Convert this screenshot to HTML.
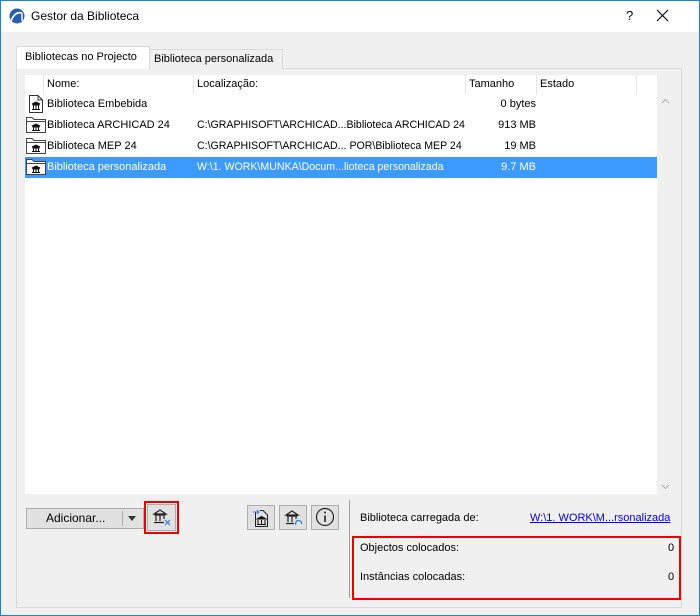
<!DOCTYPE html>
<html><head><meta charset="utf-8"><style>
*{margin:0;padding:0;box-sizing:border-box}
body{width:700px;height:616px;overflow:hidden;background:#f0f0f0;font-family:"Liberation Sans",sans-serif;font-size:11.5px;color:#000;position:relative}
.a{position:absolute;white-space:nowrap}
.btn{position:absolute;background:#e1e1e1;border:1px solid #adadad}
.hd{position:absolute;top:75px;height:19px;line-height:19px;border-right:1px solid #e5e5e5;padding-left:3px;font-size:11px}
.row{position:absolute;left:25px;width:632px;height:21px;line-height:21px;font-size:11px}
.row span{position:absolute}
.row span.r{right:121px;text-align:right}
.row span.l{font-size:10.6px}
.sel{background:#3d9bff;color:#fff}
</style></head><body>
<div class="a" style="left:0;top:0;width:700px;height:32px;background:#fff"></div>
<div class="a" style="left:0;top:0;width:1px;height:616px;background:#1883d7"></div>
<div class="a" style="left:699px;top:0;width:1px;height:616px;background:#1883d7"></div>
<div class="a" style="left:0;top:0;width:700px;height:1px;background:#1883d7"></div>
<div class="a" style="left:0;top:615px;width:700px;height:1px;background:#1883d7"></div>
<svg class="a" style="left:9px;top:8px" width="16" height="16" viewBox="0 0 16 16"><circle cx="8" cy="8" r="7.5" fill="#2a5fb0"/><path d="M2 13 Q6 3 13 5" stroke="#fff" stroke-width="1.6" fill="none"/><path d="M13 5 L13 13" stroke="#fff" stroke-width="1.4"/></svg>
<div class="a" style="left:31px;top:9px;font-size:12px">Gestor da Biblioteca</div>
<div class="a" style="left:626px;top:8px;font-size:13px">?</div>
<svg class="a" style="left:656px;top:9px" width="13" height="13"><path d="M1 1L12 12M12 1L1 12" stroke="#000" stroke-width="1.1"/></svg>

<div class="a" style="left:16px;top:68px;width:666px;height:540px;border:1px solid #d9d9d9;background:#f0f0f0"></div>
<div class="a" style="left:149px;top:49px;width:134px;height:20px;border:1px solid #d9d9d9;border-bottom:none;background:#f0f0f0;padding:3px 0 0 4px;font-size:11px">Biblioteca personalizada</div>
<div class="a" style="left:16px;top:46px;width:134px;height:23px;border:1px solid #d9d9d9;border-bottom:none;background:#fff;padding:4px 0 0 8px;font-size:11px">Bibliotecas no Projecto</div>
<div class="a" style="left:17px;top:68px;width:132px;height:1px;background:#fff"></div>

<div class="a" style="left:25px;top:75px;width:632px;height:419px;background:#fff"></div>
<div class="a" style="left:657px;top:75px;width:23px;height:419px;background:#f0f0f0"></div>
<svg class="a" style="left:661px;top:98px" width="9" height="6"><path d="M1 5L4.5 1.5L8 5" stroke="#b0b0b0" fill="none"/></svg>
<svg class="a" style="left:661px;top:484px" width="9" height="6"><path d="M1 1L4.5 4.5L8 1" stroke="#b0b0b0" fill="none"/></svg>
<div class="hd" style="left:25px;width:19px"></div>
<div class="hd" style="left:44px;width:150px">Nome:</div>
<div class="hd" style="left:194px;width:272px">Localização:</div>
<div class="hd" style="left:466px;width:71px">Tamanho</div>
<div class="hd" style="left:537px;width:100px">Estado</div>

<div class="row" style="top:94px"><span style="left:22px">Biblioteca Embebida</span><span class="r">0 bytes</span></div>
<div class="row" style="top:115px"><span style="left:22px">Biblioteca ARCHICAD 24</span><span class="l" style="left:172px">C:\GRAPHISOFT\ARCHICAD...Biblioteca ARCHICAD 24</span><span class="r">913 MB</span></div>
<div class="row" style="top:136px"><span style="left:22px">Biblioteca MEP 24</span><span class="l" style="left:172px">C:\GRAPHISOFT\ARCHICAD... POR\Biblioteca MEP 24</span><span class="r">19 MB</span></div>
<div class="row sel" style="top:157px"><span style="left:22px">Biblioteca personalizada</span><span class="l" style="left:172px">W:\1. WORK\MUNKA\Docum...lioteca personalizada</span><span class="r">9.7 MB</span></div>

<svg class="a" style="left:28px;top:95px" width="16" height="18" viewBox="0 0 16 18"><path d="M1.5 .5H10L14.5 5V17.5H1.5Z M10 .5V5H14.5" fill="#fff" stroke="#333"/><path d="M4 9L8 7L12 9Z M4.5 10H11.5 M5.5 10V14 M8 10V14 M10.5 10V14 M4 14.5H12" stroke="#111" fill="#111" stroke-width="1"/></svg>
<svg class="a" style="left:26px;top:116px" width="20" height="17" viewBox="0 0 20 17"><path d="M.5 1.5H6L8 3.5H19.5V16.5H.5Z M.5 5.5H19.5" fill="#fff" stroke="#444"/><path d="M6 10L10 8L14 10Z M6.5 11H13.5 M7.5 11V14 M10 11V14 M12.5 11V14 M6 14.5H14" stroke="#111" fill="#111"/></svg>
<svg class="a" style="left:26px;top:137px" width="20" height="17" viewBox="0 0 20 17"><path d="M.5 1.5H6L8 3.5H19.5V16.5H.5Z M.5 5.5H19.5" fill="#fff" stroke="#444"/><path d="M6 10L10 8L14 10Z M6.5 11H13.5 M7.5 11V14 M10 11V14 M12.5 11V14 M6 14.5H14" stroke="#111" fill="#111"/></svg>
<svg class="a" style="left:26px;top:158px" width="20" height="17" viewBox="0 0 20 17"><path d="M.5 1.5H6L8 3.5H19.5V16.5H.5Z M.5 5.5H19.5" fill="#fff" stroke="#444"/><path d="M6 10L10 8L14 10Z M6.5 11H13.5 M7.5 11V14 M10 11V14 M12.5 11V14 M6 14.5H14" stroke="#111" fill="#111"/></svg>

<div class="btn" style="left:26px;top:508px;width:118px;height:21px"></div>
<div class="a" style="left:46px;top:511px;font-size:12px">Adicionar...</div>
<div class="a" style="left:122px;top:511px;width:1px;height:15px;background:#adadad"></div>
<div class="a" style="left:128px;top:516px;width:0;height:0;border-left:4px solid transparent;border-right:4px solid transparent;border-top:5px solid #333"></div>
<div class="a" style="left:144px;top:501px;width:35px;height:33px;border:2px solid #e00"></div>
<div class="btn" style="left:147px;top:504px;width:29px;height:27px"></div>
<svg class="a" style="left:152px;top:508px" width="20" height="18" viewBox="0 0 20 18"><path d="M2 6L8 2L14 6Z M2.5 7H13.5 M4 7V13 M8 7V13 M12 7V11 M2 14.5H12" stroke="#222" fill="none" stroke-width="1.2"/><path d="M13 12L18 17M18 12L13 17" stroke="#2a7de1" stroke-width="1.2"/></svg>

<div class="btn" style="left:247px;top:505px;width:28px;height:25px"></div>
<svg class="a" style="left:252px;top:507px" width="18" height="21" viewBox="0 0 18 21"><path d="M3.5 4.5V19.5H15.5V8L11 3.5H8" fill="none" stroke="#222"/><path d="M1 5H7M5 3L7 5L5 7" stroke="#2a7de1" fill="none"/><path d="M5 12L9.5 9.5L14 12Z M6 13V17 M9.5 13V17 M13 13V17 M5 17.5H14" stroke="#111" fill="#111"/></svg>
<div class="btn" style="left:279px;top:505px;width:28px;height:25px"></div>
<svg class="a" style="left:284px;top:509px" width="20" height="18" viewBox="0 0 20 18"><path d="M2 6L8 2L14 6Z M2.5 7H13.5 M4 7V13 M8 7V13 M12 7V10 M2 14.5H10" stroke="#222" fill="none" stroke-width="1.2"/><path d="M12 16A3 3 0 1 1 17.5 15" stroke="#2a7de1" fill="none" stroke-width="1.2"/></svg>
<div class="btn" style="left:311px;top:505px;width:28px;height:25px"></div>
<svg class="a" style="left:315px;top:507px" width="20" height="20" viewBox="0 0 20 20"><circle cx="10" cy="10" r="8.5" fill="none" stroke="#222" stroke-width="1.2"/><path d="M10 8.5V15" stroke="#222" stroke-width="1.6"/><circle cx="10" cy="5.5" r="1" fill="#222"/></svg>

<div class="a" style="left:349px;top:500px;width:1px;height:98px;background:#a0a0a0"></div>
<div class="a" style="left:360px;top:512px;font-size:11px">Biblioteca carregada de:</div>
<div class="a" style="left:530px;top:512px;color:#0000ee;text-decoration:underline;font-size:11px">W:\1. WORK\M...rsonalizada</div>
<div class="a" style="left:352px;top:536px;width:329px;height:64px;border:2px solid #e00"></div>
<div class="a" style="left:360px;top:542px;font-size:11px">Objectos colocados:</div>
<div class="a" style="left:668px;top:542px;font-size:11px">0</div>
<div class="a" style="left:360px;top:571px;font-size:11px">Instâncias colocadas:</div>
<div class="a" style="left:668px;top:571px;font-size:11px">0</div>
</body></html>
